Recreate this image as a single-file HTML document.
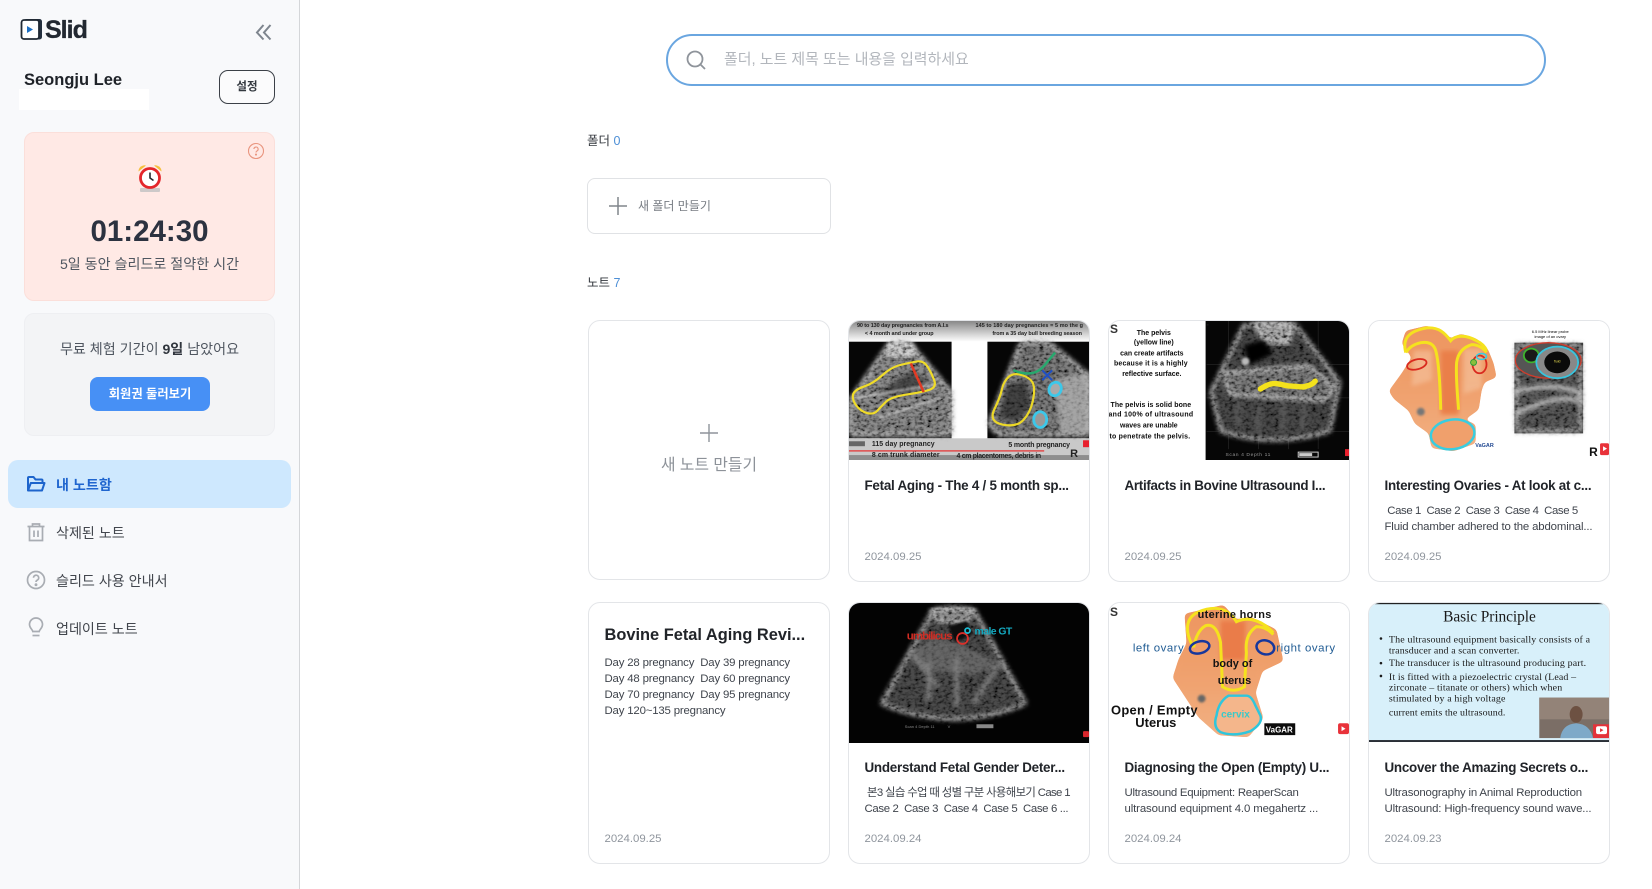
<!DOCTYPE html>
<html lang="ko"><head><meta charset="utf-8"><title>Slid</title>
<style>
*{box-sizing:border-box}
html,body{margin:0;padding:0;width:1652px;height:889px;overflow:hidden;background:#fff;font-family:"Liberation Sans","Noto Sans CJK KR",sans-serif;color:#222}
.a{position:absolute}
.t{position:absolute;white-space:nowrap;line-height:20px}
.c{transform:translateX(-50%)}
#side{left:0;top:0;width:300px;height:889px;background:#f8f9fb;border-right:1px solid #d4d6d9}
.card{position:absolute;width:242px;background:#fff;border:1px solid #e3e5e8;border-radius:12px;overflow:hidden}
.card svg{position:absolute;left:0;top:0;display:block}
.ti{position:absolute;left:15.5px;font-size:13.4px;font-weight:bold;color:#212429;white-space:nowrap;line-height:20px;letter-spacing:-.25px}
.de{position:absolute;left:15.5px;font-size:11.4px;color:#3f444c;white-space:nowrap;line-height:16px;letter-spacing:-.15px}
.da{position:absolute;left:15.5px;font-size:11.4px;color:#8f959d;white-space:nowrap;line-height:16px}
.nav{font-size:14.1px;color:#42464d;left:56px}
</style></head><body>
<svg width="0" height="0" style="position:absolute"><defs>
<filter id="b1" x="-20%" y="-20%" width="140%" height="140%"><feGaussianBlur stdDeviation="1"/></filter>
<filter id="b2" x="-20%" y="-20%" width="140%" height="140%"><feGaussianBlur stdDeviation="2.2"/></filter>
<filter id="b0" x="-5%" y="-5%" width="110%" height="110%"><feGaussianBlur stdDeviation=".35"/></filter>
<filter id="us" x="-10%" y="-10%" width="120%" height="120%"><feGaussianBlur in="SourceGraphic" stdDeviation="2.600" result="s"/><feTurbulence type="fractalNoise" baseFrequency=".24 .34" numOctaves="2" seed="4"/><feColorMatrix values="2.400 0 0 0 -.5 2.400 0 0 0 -.5 2.400 0 0 0 -.5 0 0 0 0 1" result="n"/><feComposite in="n" in2="s" operator="in" result="n2"/><feBlend in="n2" in2="s" mode="multiply"/></filter>
<filter id="sm" x="-10%" y="-10%" width="120%" height="120%"><feGaussianBlur stdDeviation="2.200"/><feColorMatrix values="1 0 0 0 0 0 1 0 0 0 0 0 1 0 0 0 0 0 14 -6"/></filter>
<linearGradient id="top" x1="0" y1="0" x2="0" y2="1"><stop offset="0" stop-color="#888"/><stop offset="1" stop-color="#fff"/></linearGradient>
<linearGradient id="org" x1="0" y1="0" x2="0" y2="1"><stop offset="0" stop-color="#ee9560"/><stop offset=".6" stop-color="#f0a370"/><stop offset="1" stop-color="#f2b184"/></linearGradient>
</defs></svg>

<div class="a" id="side"></div>
<!-- logo -->
<svg class="a" style="left:20px;top:18px" width="24" height="23" viewBox="0 0 24 23"><rect x="4" y="1" width="18" height="20.500" rx="2.500" fill="#24303f"/><rect x="1.500" y="2" width="17.500" height="19" rx="2.500" fill="#fff" stroke="#1f2833" stroke-width="1.800"/><path d="M7 8v7l6-3.500z" fill="#1c6fc4"/></svg>
<div class="t" style="left:45px;top:19px;font-size:25px;font-weight:bold;letter-spacing:-1px;color:#222831;line-height:22px;-webkit-text-stroke:.3px #222831">Slid</div>
<svg class="a" style="left:255px;top:23px" width="18" height="18" viewBox="0 0 18 18" fill="none" stroke="#7e858e" stroke-width="2"><path d="M8.500 2L2 9.500 8.500 16.500M15.500 2L9 9.500 15.500 16.500"/></svg>

<div class="t" style="left:24px;top:70px;font-size:16.500px;font-weight:bold;color:#1e2228">Seongju Lee</div>
<div class="a" style="left:19px;top:89px;width:130px;height:21px;background:#fff"></div>
<div class="a" style="left:219px;top:70px;width:56px;height:34px;border:1px solid #3b4047;border-radius:9px;background:#fbfbfc"></div>
<div class="t c" style="left:247px;top:77px;font-size:11.500px;font-weight:bold;color:#33383f">설정</div>

<div class="a" style="left:24px;top:132px;width:251px;height:169px;background:#ffe9e5;border:1px solid #fbdfda;border-radius:10px"></div>
<svg class="a" style="left:247px;top:142px" width="18" height="18" viewBox="0 0 18 18" fill="none" stroke="#e9957f" stroke-width="1.100"><circle cx="9" cy="9" r="7.500"/><path d="M6.900 7a2.100 2.100 0 1 1 3 2c-.7.400-.9.700-.9 1.500"/><circle cx="9" cy="12.600" r=".5" fill="#e9957f"/></svg>
<svg class="a" style="left:136px;top:162px" width="28" height="32" viewBox="0 0 28 32"><path d="M2.500 9.500A6 6 0 0 1 10 3.500z" fill="#f6bf3c"/><path d="M25.500 9.500A6 6 0 0 0 18 3.500z" fill="#f6bf3c"/><rect x="4" y="26" width="20" height="4" rx="1" fill="#cdc9c9"/><circle cx="14" cy="16" r="9.500" fill="#fff" stroke="#e3262b" stroke-width="2.800"/><path d="M14 10.500V16l3.500 2.500" fill="none" stroke="#22262c" stroke-width="1.600"/></svg>
<div class="t c" style="left:149.500px;top:222px;font-size:29.500px;font-weight:bold;color:#2c3240">01:24:30</div>
<div class="t c" style="left:149.500px;top:254px;font-size:14.100px;color:#4f5660">5일 동안 슬리드로 절약한 시간</div>

<div class="a" style="left:24px;top:313px;width:251px;height:123px;background:#f3f4f6;border:1px solid #eeeff2;border-radius:10px"></div>
<div class="t c" style="left:149.500px;top:339px;font-size:14.100px;color:#4f5660">무료 체험 기간이 <b style="color:#30353d">9일</b> 남았어요</div>
<div class="a" style="left:90px;top:377px;width:120px;height:34px;background:#4790f5;border-radius:8px"></div>
<div class="t c" style="left:150px;top:384px;font-size:12.300px;font-weight:bold;color:#fff">회원권 둘러보기</div>

<div class="a" style="left:8px;top:460px;width:283px;height:48px;background:#cee8fe;border-radius:10px"></div>
<svg class="a" style="left:26px;top:474px" width="20" height="20" viewBox="0 0 20 20" fill="none" stroke="#1d64cc" stroke-width="2" stroke-linejoin="round"><path d="M2 16.500V4a1 1 0 0 1 1-1h4.500l2 2.500H15.500a1 1 0 0 1 1 1V9"/><path d="M2 16.500L4.800 9H18.500l-2.500 7.500z"/></svg>
<div class="t nav" style="top:475px;color:#1f65cf;font-weight:bold">내 노트함</div>
<svg class="a" style="left:26px;top:522px" width="20" height="20" viewBox="0 0 20 20" fill="none" stroke="#a9adb3" stroke-width="1.700"><path d="M1.500 4.500h17M6.500 4.500V2h7v2.500M3.500 4.500v14h13v-14M8 8.500v6.500M12 8.500v6.500"/></svg>
<div class="t nav" style="top:523px">삭제된 노트</div>
<svg class="a" style="left:26px;top:570px" width="20" height="20" viewBox="0 0 20 20" fill="none" stroke="#a9adb3" stroke-width="1.700"><circle cx="10" cy="10" r="8.500"/><path d="M7.500 7.800a2.600 2.600 0 1 1 3.800 2.300c-.9.500-1.300.9-1.300 1.900"/><circle cx="10" cy="14.700" r=".6" fill="#a9adb3"/></svg>
<div class="t nav" style="top:571px">슬리드 사용 안내서</div>
<svg class="a" style="left:26px;top:617px" width="20" height="20" viewBox="0 0 20 20" fill="none" stroke="#a9adb3" stroke-width="1.700"><path d="M6.800 14.500C6.500 12.500 3.500 11 3.500 7.500a6.500 6.500 0 0 1 13 0c0 3.500-3 5-3.300 7z"/><path d="M6.500 18.500h7"/></svg>
<div class="t nav" style="top:619px">업데이트 노트</div>

<!-- main -->
<div class="a" style="left:666px;top:34px;width:880px;height:52px;border:2px solid #6aa6e0;border-radius:26px"></div>
<svg class="a" style="left:685px;top:49px" width="22" height="22" viewBox="0 0 22 22" fill="none" stroke="#8f949b" stroke-width="1.800"><circle cx="10" cy="10" r="7.500"/><path d="M15.500 15.500L20 20"/></svg>
<div class="t" style="left:724px;top:50px;font-size:14.950px;color:#b2b6bc">폴더, 노트 제목 또는 내용을 입력하세요</div>

<div class="t" style="left:587px;top:131px;font-size:12.500px;color:#35393f">폴더 <span style="color:#4d8fd6">0</span></div>
<div class="a" style="left:587px;top:178px;width:244px;height:56px;border:1px solid #e0e2e5;border-radius:8px"></div>
<svg class="a" style="left:608px;top:196px" width="20" height="20" viewBox="0 0 20 20" stroke="#80858c" stroke-width="1.500"><path d="M10 1v18M1 10h18"/></svg>
<div class="t" style="left:638px;top:196px;font-size:12px;color:#777c83">새 폴더 만들기</div>
<div class="t" style="left:587px;top:273px;font-size:12.500px;color:#35393f">노트 <span style="color:#4d8fd6">7</span></div>

<!-- create note -->
<div class="card" style="left:588px;top:320px;height:260px"></div>
<svg class="a" style="left:700px;top:424px" width="18" height="18" viewBox="0 0 18 18" stroke="#8f949b" stroke-width="1.400"><path d="M9 0v18M0 9h18"/></svg>
<div class="t c" style="left:709px;top:456px;font-size:15.800px;color:#8d9299">새 노트 만들기</div>

<!-- card 1 -->
<div class="card" style="left:848px;top:320px;height:262px">
<svg width="240" height="139" viewBox="0 0 241 141" preserveAspectRatio="none">
<rect width="241" height="141" fill="#fff"/><rect width="241" height="21" fill="url(#top)"/>
<rect x="0" y="21" width="103" height="98" fill="#060606"/><rect x="139" y="21" width="102" height="98" fill="#060606"/>
<rect y="119" width="241" height="22" fill="#c9c9c9"/><rect y="136" width="241" height="5" fill="#8e8e8e"/>
<path d="M40 23Q52 19 62 23L103 72V116H1V80z" fill="#8c8c8c" filter="url(#us)"/>
<path d="M40 22h22l4 12-26 2z" fill="#c8c8c8" filter="url(#us)"/>
<path d="M28 74L60 52 80 60 60 74z" fill="#222" opacity=".6" filter="url(#b2)"/>
<path d="M8 78l80-14M30 98l62-20" stroke="#dcdcdc" stroke-width="2" opacity=".7" filter="url(#b1)"/>
<path d="M172 22Q188 19 203 23L241 55V116H150L140 105z" fill="#7e7e7e" filter="url(#us)"/>
<path d="M158 66l20-6 4 28-14 14-18-4z" fill="#1a1a1a" opacity=".6" filter="url(#b2)"/>
<path d="M205 60l36-8v62h-28z" fill="#c0c0c0" opacity=".6" filter="url(#b2)"/>
<path d="M15 66.500Q25 63 33.500 55Q42 47 52 44.500Q62 42 68.500 41Q75 40 79 46.500Q83 53 85.500 60Q88 67 81.500 69.500Q75 72 58.500 74.500Q42 77 37 82Q32 87 28.500 91Q25 95 18.500 93.500Q12 92 7.500 86Q3 80 4 75Q5 70 15 66.500z" fill="none" stroke="#f0dc28" stroke-width="2.200"/>
<path d="M62 43L75 72" stroke="#e13a24" stroke-width="2.600"/>
<path d="M174 55Q183 58 185 64Q187 70 184.500 81.500Q182 93 175 100.500Q168 108 154 105Q140 102 146 89.500Q152 77 153.500 69.500Q155 62 160 57Q165 52 174 55z" fill="none" stroke="#ecd827" stroke-width="2.200"/>
<path d="M165 50Q175 54 183 53T198 43L207 32" fill="none" stroke="#27a96e" stroke-width="2.500"/>
<path d="M194 50l10 10M204 50l-10 10" stroke="#1f4fc4" stroke-width="2"/>
<ellipse cx="207" cy="69" rx="6" ry="7" transform="rotate(25 207 69)" fill="#aaa" stroke="#3cc8ea" stroke-width="2.800"/>
<ellipse cx="192" cy="100" rx="6.500" ry="8" fill="#999" stroke="#3cc8ea" stroke-width="2.800"/>
<g font-family="Liberation Sans" font-weight="bold" fill="#222" filter="url(#b0)">
<text x="8" y="6" font-size="5.500" textLength="92">90 to 130 day pregnancies from A.I.s</text>
<text x="16" y="14" font-size="5.500" textLength="69">&lt; 4 month and under group</text>
<text x="127" y="6" font-size="5.500" textLength="108">145 to 180 day pregnancies = 5 mo the g</text>
<text x="144" y="14" font-size="5.500" textLength="90">from a 35 day bull breeding season</text>
<text x="23" y="127" font-size="7" textLength="63">115 day pregnancy</text>
<text x="160" y="128" font-size="7" textLength="62">5 month pregnancy</text>
<text x="23" y="138" font-size="7" textLength="68">8 cm trunk diameter</text>
<text x="108" y="139" font-size="7" textLength="85">4 cm placentomes, debris in</text>
<text x="222" y="138" font-size="11">R</text></g>
<rect x="0" y="131" width="196" height="1.500" fill="#e04a4a"/>
<rect x="0" y="122" width="16" height="5" fill="#666"/><rect x="235" y="121" width="6" height="7" fill="#e81f2d"/>
</svg>
<div class="ti" style="top:155px">Fetal Aging - The 4 / 5 month sp...</div>
<div class="da" style="top:228px">2024.09.25</div></div>

<!-- card 2 -->
<div class="card" style="left:1108px;top:320px;height:262px">
<svg width="240" height="139" viewBox="0 0 241 141" preserveAspectRatio="none">
<rect width="241" height="141" fill="#fff"/>
<rect x="97" y="0" width="144" height="141" fill="#060606"/>
<path d="M98 4h2M98 44h143M98 78h143M98 112h143M120 0v130M150 0v130M180 0v130M210 0v130" stroke="#333" stroke-width=".5"/>
<path d="M135 4Q160 0 188 4L232 62 222 112Q165 130 112 112L102 72z" fill="#4a4a4a" filter="url(#us)"/>
<path d="M146 3h40l-6 20-24-2z" fill="#aaa" filter="url(#us)"/>
<path d="M115 52L200 45l28 22-12 14-95-6z" fill="#808080" filter="url(#us)"/>
<path d="M135 25l20-6 10 14-24 12z" fill="#060606" filter="url(#b2)"/><circle cx="137" cy="41" r="4" fill="#bbb" filter="url(#b1)"/>
<path d="M130 82v26M150 85v28M175 80v32M195 85v26" stroke="#666" stroke-width="6" opacity=".6" filter="url(#b2)"/>
<path d="M152 69Q158 65 162 64C170 62 175 66 182 66S195 68 198 66Q204 65 207 61" fill="none" stroke="#f4e21c" stroke-width="5.500" stroke-linecap="round"/>
<g font-family="Liberation Sans" font-size="5" fill="#999"><text x="117" y="137" textLength="45">Scan 4 Depth 11</text></g>
<rect x="190" y="133" width="20" height="5" fill="none" stroke="#ccc"/><rect x="191" y="134" width="13" height="3" fill="#ccc"/>
<rect x="237" y="130" width="4" height="7" fill="#e81f2d"/>
<g font-family="Liberation Sans" font-size="7" font-weight="bold" text-anchor="middle" fill="#0a0a0a" filter="url(#b0)">
<text x="45" y="14">The pelvis</text><text x="45" y="24">(yellow line)</text><text x="43" y="35">can create artifacts</text><text x="42" y="45" textLength="74">because it is a highly</text><text x="43" y="56">reflective surface.</text>
<text x="42" y="87" textLength="81">The pelvis is solid bone</text><text x="42" y="97" textLength="85">and 100% of ultrasound</text><text x="40" y="108">waves are unable</text><text x="41" y="119" textLength="81">to penetrate the pelvis.</text></g>
<text x="1" y="12" font-family="Liberation Sans" font-size="12" font-weight="bold" fill="#333">S</text>
</svg>
<div class="ti" style="top:155px;letter-spacing:-.3px">Artifacts in Bovine Ultrasound I...</div>
<div class="da" style="top:228px">2024.09.25</div></div>

<!-- card 3 -->
<div class="card" style="left:1368px;top:320px;height:262px">
<svg width="240" height="139" viewBox="0 0 241 141" preserveAspectRatio="none">
<rect width="241" height="141" fill="#fff"/>
<path d="M33 23L37 10 58 5 75 11 82 18 92 13 108 18 119 28 125 43 128 57 116 62 113 70 110 90 96 100 107 105 107 124 85 132 63 129 60 114 46 104 40 91 25 79 20 71 33 53 43 37z" fill="url(#org)" filter="url(#sm)"/>
<path d="M72 30h18v65H72z" fill="#ea7f4a" filter="url(#b2)"/>
<path d="M45 30h18v30l-20 6z" fill="#f6c8a6" opacity=".55" filter="url(#b2)"/><path d="M95 28h18v40l-18 6z" fill="#f6c8a6" opacity=".55" filter="url(#b2)"/>
<circle cx="52" cy="92" r="4" fill="#777" filter="url(#b1)"/>
<path d="M37 32C33 18 40 10 58 7C70 6 76 12 82 20C86 15 96 13 108 20Q116 24 118 30" fill="none" stroke="#f5e21e" stroke-width="3"/>
<path d="M37 32Q42 24 52 22Q64 20 67 30Q71 45 72 90" fill="none" stroke="#f5e21e" stroke-width="3"/>
<path d="M90 90Q87 55 88 42Q90 28 103 24Q112 24 118 32" fill="none" stroke="#f5e21e" stroke-width="3"/>
<ellipse cx="84" cy="115" rx="22" ry="15" transform="rotate(-8 84 115)" fill="#f0a06c" stroke="#38cde0" stroke-width="2.500"/>
<ellipse cx="48" cy="44" rx="10" ry="5" transform="rotate(-15 48 44)" fill="none" stroke="#d92a1e" stroke-width="1.800"/>
<ellipse cx="111" cy="44" rx="7" ry="9" fill="none" stroke="#d92a1e" stroke-width="1.800"/>
<circle cx="105" cy="42" r="3" fill="#8bbf3c" stroke="#2b9e3c"/><ellipse cx="113" cy="36" rx="5" ry="3" fill="none" stroke="#38cde0" stroke-width="1.500"/>
<rect x="146" y="22" width="69" height="92" fill="#2e2e2e"/>
<rect x="148" y="24" width="65" height="88" fill="#5a5a5a" filter="url(#us)"/>
<path d="M146 72Q190 60 215 75M146 95Q190 72 215 82" stroke="#c8c8c8" stroke-width="4" fill="none" filter="url(#b2)"/>
<ellipse cx="180" cy="40" rx="33" ry="18" fill="#555" stroke="#d03c2c" stroke-width="1.300"/>
<ellipse cx="163" cy="35" rx="7.500" ry="7" fill="#1a1a1a" stroke="#3eb42e" stroke-width="1.800"/>
<ellipse cx="189" cy="42" rx="21" ry="16" fill="#888" stroke="#38c4de" stroke-width="1.800"/>
<ellipse cx="189" cy="42" rx="13" ry="11" fill="#0a0a0a"/>
<g font-family="Liberation Sans" text-anchor="middle"><text x="182" y="12" font-size="4">6.5 MHz linear probe</text><text x="182" y="17" font-size="4">image of an ovary</text><text x="189" y="42" font-size="3.500" fill="#e8dc50">fluid</text>
<text x="116" y="128" font-size="5.500" font-weight="bold" fill="#234a93">VaGAR</text></g>
<text x="221" y="137" font-family="Liberation Sans" font-size="12" font-weight="bold" fill="#111">R</text>
<rect x="232" y="124" width="9" height="12" rx="1.500" fill="#e8323a"/><path d="M235 127v5l4-2.500z" fill="#fff"/>
</svg>
<div class="ti" style="top:155px">Interesting Ovaries - At look at c...</div>
<div class="de" style="top:182px;letter-spacing:-.4px">&nbsp;Case 1&nbsp; Case 2&nbsp; Case 3&nbsp; Case 4&nbsp; Case 5</div>
<div class="de" style="top:198px">Fluid chamber adhered to the abdominal...</div>
<div class="da" style="top:228px">2024.09.25</div></div>

<!-- card 4 -->
<div class="card" style="left:588px;top:602px;height:262px">
<div class="ti" style="top:22px;font-size:16.400px;letter-spacing:0">Bovine Fetal Aging Revi...</div>
<div class="de" style="top:52px;letter-spacing:-.17px">Day 28 pregnancy&nbsp; Day 39 pregnancy</div>
<div class="de" style="top:68px;letter-spacing:-.17px">Day 48 pregnancy&nbsp; Day 60 pregnancy</div>
<div class="de" style="top:84px;letter-spacing:-.17px">Day 70 pregnancy&nbsp; Day 95 pregnancy</div>
<div class="de" style="top:100px;letter-spacing:-.17px">Day 120~135 pregnancy</div>
<div class="da" style="top:228px">2024.09.25</div></div>

<!-- card 5 -->
<div class="card" style="left:848px;top:602px;height:262px">
<svg width="240" height="140" viewBox="0 0 241 142" preserveAspectRatio="none">
<rect width="241" height="142" fill="#030303"/>
<path d="M84 7Q105 2 126 7L178 102Q105 134 32 102z" fill="#4c4c4c" filter="url(#us)"/>
<path d="M82 6h44l-8 14-30-2z" fill="#8c8c8c" filter="url(#us)"/>
<path d="M62 50L90 85M150 62l-25 40M80 60v40M108 55v50" stroke="#a0a0a0" stroke-width="5" opacity=".6" filter="url(#b2)"/>
<path d="M100 24l18-6 6 14-18 8z" fill="#0a0a0a" filter="url(#b1)"/>
<path d="M60 50l25-15 30 8 40 20-30 10-50-5z" fill="#888" opacity=".45" filter="url(#b2)"/>
<text x="58" y="37" font-family="Liberation Sans" font-size="11.500" font-weight="bold" fill="#d12c23" textLength="46">umbilicus</text>
<circle cx="114" cy="36" r="5.500" fill="none" stroke="#d9302a" stroke-width="1.800"/>
<circle cx="119" cy="28" r="2.500" fill="none" stroke="#1cb9d0" stroke-width="1.800"/>
<text x="126" y="32" font-family="Liberation Sans" font-size="10.500" font-weight="bold" fill="#14a9c0" textLength="38">male GT</text>
<g font-family="Liberation Sans" font-size="4" fill="#888"><text x="56" y="127" textLength="30">Scan 4 Depth 11</text><text x="99" y="127">V</text></g>
<rect x="128" y="123" width="17" height="4" fill="#888"/><rect x="235" y="130" width="6" height="6" rx="1" fill="#d8262c"/>
</svg>
<div class="ti" style="top:155px">Understand Fetal Gender Deter...</div>
<div class="de" style="top:182px;letter-spacing:-.65px">&nbsp;본3 실습 수업 때 성별 구분 사용해보기 Case 1</div>
<div class="de" style="top:198px;letter-spacing:-.35px">Case 2&nbsp; Case 3&nbsp; Case 4&nbsp; Case 5&nbsp; Case 6 ...</div>
<div class="da" style="top:228px">2024.09.24</div></div>

<!-- card 6 -->
<div class="card" style="left:1108px;top:602px;height:262px">
<svg width="240" height="140" viewBox="0 0 241 142" preserveAspectRatio="none">
<rect width="241" height="142" fill="#fff"/>
<path d="M76 11L115 2 128 17 142 14 168 27 175 59 154 69 147 91 155 117 140 136 110 134 90 116 64 76 70 57 78 41z" fill="url(#org)" filter="url(#sm)"/>
<path d="M112 18h25v40h-25z" fill="#ea7c48" filter="url(#b2)"/><circle cx="93" cy="97" r="4" fill="#666" filter="url(#b1)"/>
<path d="M85 45C76 30 76 15 90 9C102 4 118 2 128 19C136 15 150 14 165 30" fill="none" stroke="#f5e21e" stroke-width="3"/>
<path d="M85 45Q88 28 97 23Q108 20 112 40L114 85Q125 92 136 85L138 50Q136 32 148 24Q158 24 165 32" fill="none" stroke="#f5e21e" stroke-width="3"/>
<path d="M120 94H138Q143 94 147 104L152 114Q155 122 142 130Q125 136 112 131Q104 126 108 114Q110 100 120 94z" fill="#f4b68b" stroke="#2fc6dc" stroke-width="2.500"/>
<ellipse cx="91" cy="45" rx="10" ry="6" transform="rotate(-15 91 45)" fill="none" stroke="#17379c" stroke-width="2.500"/>
<ellipse cx="157" cy="45" rx="9" ry="7" transform="rotate(15 157 45)" fill="none" stroke="#17379c" stroke-width="2.500"/>
<g font-family="Liberation Sans">
<text x="89" y="15" font-size="11" textLength="74" font-weight="bold" fill="#141414">uterine horns</text>
<text x="24" y="49" font-size="11.500" textLength="51" fill="#1f5b93">left ovary</text>
<text x="168" y="49" font-size="11.500" textLength="59" fill="#1f5b93">right ovary</text>
<text x="124" y="65" font-size="11" font-weight="bold" text-anchor="middle" fill="#141414">body of</text>
<text x="126" y="82" font-size="11" font-weight="bold" text-anchor="middle" fill="#141414">uterus</text>
<text x="2" y="113" font-size="13" font-weight="bold" textLength="87" fill="#111">Open / Empty</text>
<text x="47" y="126" font-size="13" font-weight="bold" text-anchor="middle" fill="#111">Uterus</text>
<text x="127" y="116" font-size="10" font-weight="bold" text-anchor="middle" fill="#38c9c9">cervix</text>
<rect x="156" y="122" width="31" height="12" fill="#0c0c0c"/>
<text x="171" y="131.500" font-size="8" font-weight="bold" text-anchor="middle" fill="#fff">VaGAR</text>
<text x="1" y="13" font-size="12" font-weight="bold" fill="#333">S</text></g>
<rect x="230" y="122" width="11" height="11" rx="2" fill="#e8323a"/><path d="M233.500 125v5l4-2.500z" fill="#fff"/>
</svg>
<div class="ti" style="top:155px">Diagnosing the Open (Empty) U...</div>
<div class="de" style="top:182px;letter-spacing:-.26px">Ultrasound Equipment: ReaperScan</div>
<div class="de" style="top:198px;letter-spacing:-.12px">ultrasound equipment 4.0 megahertz ...</div>
<div class="da" style="top:228px">2024.09.24</div></div>

<!-- card 7 -->
<div class="card" style="left:1368px;top:602px;height:262px">
<svg width="240" height="140" viewBox="0 0 241 142" preserveAspectRatio="none">
<rect width="241" height="142" fill="#d8f0fa"/>
<rect width="241" height="1.200" fill="#222"/><rect y="139" width="241" height="2" fill="#2a2f36"/><rect y="141" width="241" height="1" fill="#fff"/>
<g font-family="Liberation Serif" fill="#1a1a1a">
<text x="121" y="19" font-size="15.500" text-anchor="middle" textLength="93">Basic Principle</text>
<g font-size="10"><circle cx="12" cy="36" r="1.300"/><circle cx="12" cy="61" r="1.300"/><circle cx="12" cy="74" r="1.300"/>
<text x="20" y="40" textLength="202">The ultrasound equipment basically consists of a</text>
<text x="20" y="51" textLength="131">transducer and a scan converter.</text>
<text x="20" y="64" textLength="198">The transducer is the ultrasound producing part.</text>
<text x="20" y="78" textLength="188">It is fitted with a piezoelectric crystal (Lead –</text>
<text x="20" y="89" textLength="174">zirconate – titanate or others) which when</text>
<text x="20" y="100" textLength="117">stimulated by a high voltage</text>
<text x="20" y="114" textLength="117">current emits the ultrasound.</text></g></g>
<rect x="171" y="96" width="70" height="41" fill="#7b6e66"/>
<rect x="171" y="96" width="70" height="22" fill="#938378"/>
<ellipse cx="208" cy="113" rx="6.500" ry="8.500" fill="#6d5142"/>
<path d="M192 137q2-14 16-15 14 1 17 15z" fill="#7ea9c8"/>
<rect x="225" y="123" width="16" height="14" fill="#e4323a"/><rect x="228" y="125" width="11" height="8" rx="2" fill="#fff"/><path d="M232 127v4l3.500-2z" fill="#e4323a"/>
</svg>
<div class="ti" style="top:155px">Uncover the Amazing Secrets o...</div>
<div class="de" style="top:182px;letter-spacing:-.17px">Ultrasonography in Animal Reproduction</div>
<div class="de" style="top:198px;letter-spacing:-.13px">Ultrasound: High-frequency sound wave...</div>
<div class="da" style="top:228px">2024.09.23</div></div>
</body></html>
